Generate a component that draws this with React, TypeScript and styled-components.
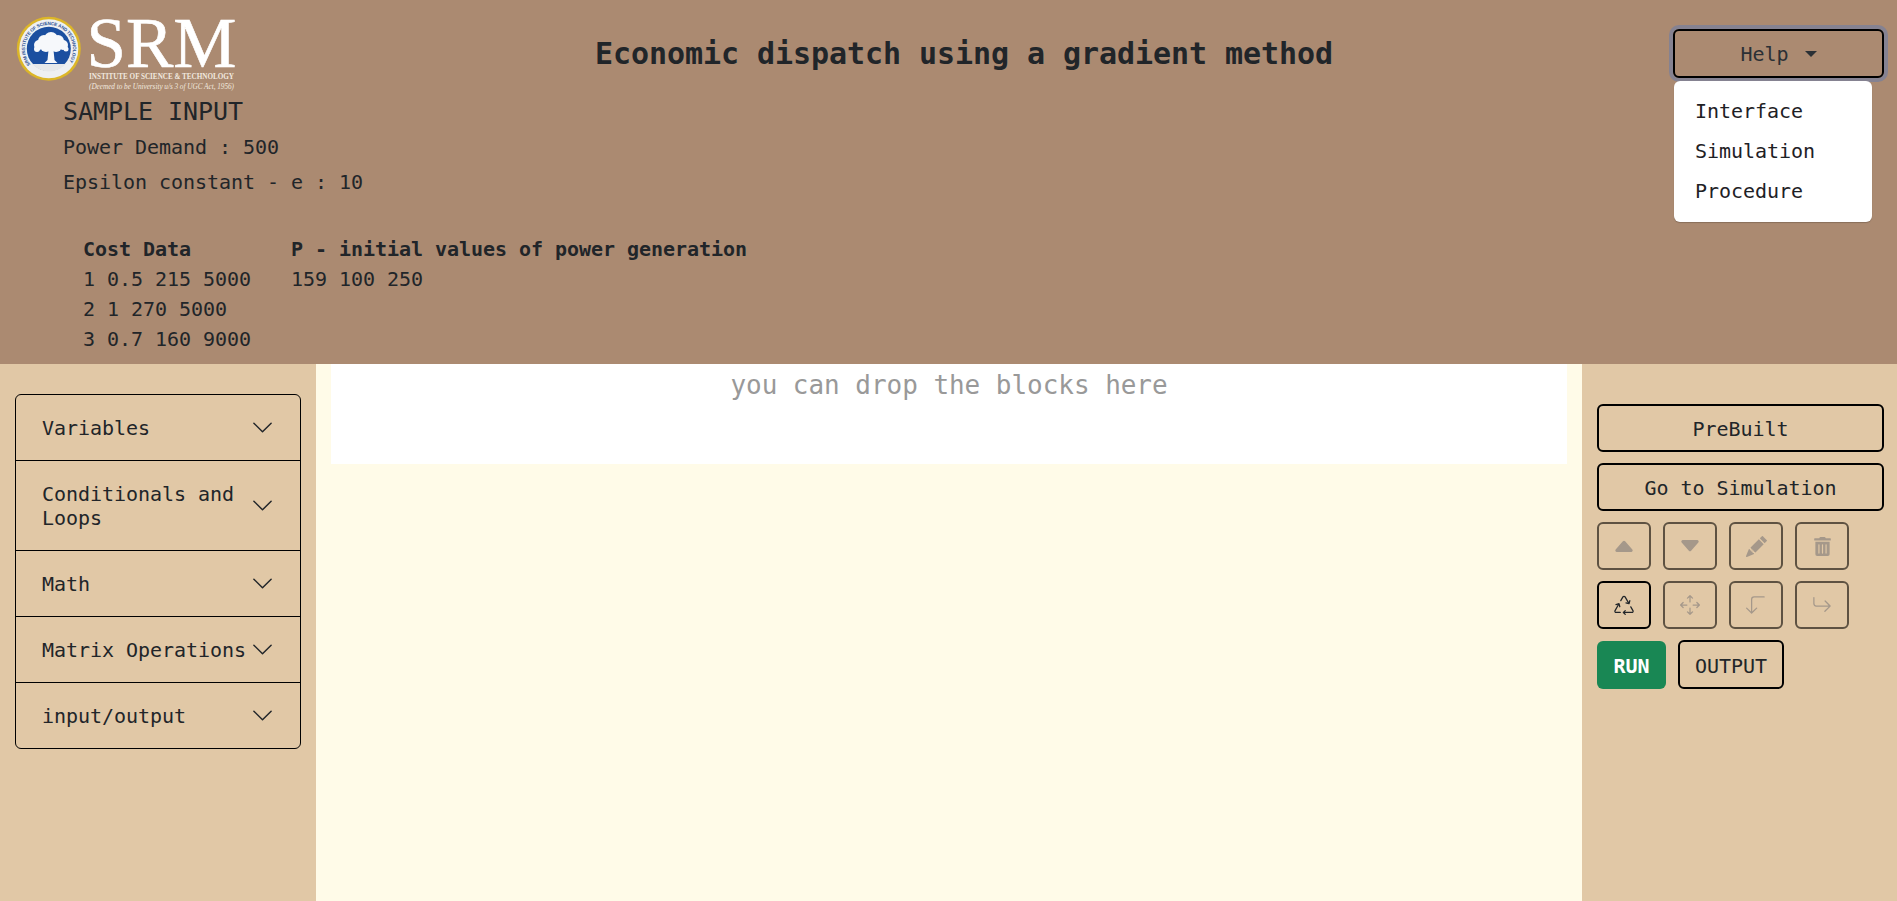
import React from "react";
import styled, { createGlobalStyle } from "styled-components";
import {
  BsCaretUpFill,
  BsCaretDownFill,
  BsFillPencilFill,
  BsRecycle,
  BsArrowsMove,
  BsArrow90DegDown,
  BsArrowReturnRight,
  BsChevronDown,
} from "react-icons/bs";
import { FaTrashAlt } from "react-icons/fa";

const Global = createGlobalStyle`
  html, body { margin: 0; padding: 0; background: #fffbe8; }
  body {
    font-family: "DejaVu Sans Mono", "Liberation Mono", monospace;
    font-size: 20px;
    color: #212529;
    letter-spacing: -0.04px;
    overflow: hidden;
  }
  * { box-sizing: border-box; }
`;

const Page = styled.div`
  width: 1897px;
  height: 901px;
  display: flex;
  flex-direction: column;
  overflow: hidden;
`;

const Header = styled.header`
  height: 364px;
  flex: none;
  background: #ab8a71;
`;

const TopRow = styled.div`
  display: flex;
  align-items: flex-start;
  height: 93px;
  padding: 14px 13px 0 15px;
`;

const Logo = styled.svg`
  display: block;
  flex: none;
  overflow: visible;
`;

const Title = styled.h1`
  flex: 1;
  margin: 0;
  font-size: 30px;
  line-height: 80px;
  font-weight: 700;
  text-align: center;
  letter-spacing: -0.06px;
`;

const HelpWrap = styled.div`
  position: relative;
  width: 211px;
  margin-top: 15px;
  flex: none;
`;

const HelpButton = styled.button`
  width: 100%;
  height: 49px;
  display: flex;
  align-items: center;
  justify-content: center;
  gap: 16px;
  background: transparent;
  border: 2px solid #000;
  border-radius: 6px;
  box-shadow: 0 0 0 4px #858291;
  color: #2b3035;
  font: inherit;
  letter-spacing: inherit;
  padding: 0;
`;

const Caret = styled.span`
  width: 0;
  height: 0;
  border-top: 6px solid #2b3035;
  border-left: 6px solid transparent;
  border-right: 6px solid transparent;
`;

const Menu = styled.ul`
  position: absolute;
  top: 52px;
  left: 1px;
  width: 198px;
  margin: 0;
  padding: 10px 0 11px;
  list-style: none;
  background: #fff;
  border-radius: 6px;
  box-shadow: 0 1px 1px rgba(0, 0, 0, 0.2);
  z-index: 2;
`;

const MenuItem = styled.li`
  height: 40px;
  line-height: 40px;
  padding-left: 21px;
  color: #1e2125;
`;

const SampleBlock = styled.div`
  padding-left: 63px;
`;

const SampleTitle = styled.h2`
  margin: 0;
  font-size: 25px;
  line-height: 37px;
  font-weight: 400;
`;

const SampleLine = styled.p`
  margin: 0;
  line-height: 35px;
`;

const CostTable = styled.div`
  display: grid;
  grid-template-columns: 208px auto;
  justify-content: start;
  grid-auto-rows: 30px;
  line-height: 30px;
  margin: 34px 0 0 20px;
`;

const Strong = styled.div`
  font-weight: 700;
`;

const Main = styled.main`
  flex: 1;
  display: flex;
  min-height: 0;
`;

const LeftPanel = styled.aside`
  width: 316px;
  flex: none;
  background: #e1c8a6;
  padding: 30px 15px 0;
`;

const Accordion = styled.div`
  width: 286px;
  border: 1px solid #000;
  border-radius: 6px;
`;

const AccordionRow = styled.div`
  display: flex;
  align-items: center;
  padding: 20.5px 26px 20.5px 26px;
  line-height: 24px;
  border-bottom: 1px solid #000;
  &:last-child {
    border-bottom: 0;
  }
`;

const RowLabel = styled.span`
  flex: 1;
  min-width: 0;
`;

const Canvas = styled.section`
  flex: 1;
  background: #fffbe8;
  padding: 0 15px;
`;

const DropZone = styled.div`
  height: 100px;
  background: #fff;
  color: #999;
  font-size: 26px;
  line-height: 42px;
  text-align: center;
`;

const RightPanel = styled.aside`
  width: 315px;
  flex: none;
  background: #e1c8a6;
  padding: 40px 13px 0 15px;
  display: flex;
  flex-direction: column;
  gap: 11px;
`;

const WideButton = styled.button`
  width: 100%;
  height: 48px;
  background: transparent;
  border: 2px solid #000;
  border-radius: 6px;
  color: #212529;
  font: inherit;
  letter-spacing: inherit;
  padding: 2px 0 0;
`;

const IconGrid = styled.div`
  display: grid;
  grid-template-columns: repeat(4, 54px);
  grid-auto-rows: 48px;
  gap: 11px 12px;
`;

const IconButton = styled.button<{ $active?: boolean }>`
  display: flex;
  align-items: center;
  justify-content: center;
  background: transparent;
  border: 2px solid ${(p) => (p.$active ? "#000" : "#5e5242")};
  border-radius: 6px;
  padding: 0;
  color: ${(p) => (p.$active ? "#212529" : "#a5988a")};
`;

const ActionRow = styled.div`
  display: flex;
  align-items: flex-start;
  gap: 12px;
`;

const RunButton = styled.button`
  width: 69px;
  height: 48px;
  margin-top: 1px;
  background: #198754;
  border: 0;
  border-radius: 6px;
  color: #fff;
  font: inherit;
  font-weight: 700;
  letter-spacing: inherit;
  padding: 2px 0 0;
`;

const OutputButton = styled.button`
  width: 106px;
  height: 49px;
  background: transparent;
  border: 2px solid #000;
  border-radius: 6px;
  color: #212529;
  font: inherit;
  letter-spacing: inherit;
  padding: 2px 0 0;
`;

const leaves = [
  [36, 25, 7], [29, 27, 6], [43, 27, 6], [24, 31, 5], [48, 31, 5], [31, 32, 6], [41, 32, 6], [36, 30, 7], [22, 35, 3], [51, 35, 2.5],
];

const SrmLogo = () => (
  <Logo width={240} height={78} viewBox="0 0 240 78">
    <defs>
      <path id="ring" d="M15.6 50.4 A24 24 0 1 1 52.4 50.4" />
    </defs>
    <circle cx="33.8" cy="34.8" r="32" fill="#dcb628" />
    <circle cx="33.8" cy="34.8" r="29.5" fill="#eef0f2" />
    <circle cx="33.8" cy="34.8" r="22" fill="#1b4fa0" />
    <path d="M17.2 50 A22.5 22.5 0 0 0 50.8 50 Z" fill="#e6e8ea" />
    <text fontFamily="Liberation Sans, sans-serif" fontSize="4.6" fill="#2a4f92" fontWeight="700">
      <textPath href="#ring" textLength="105">
        SRM INSTITUTE OF SCIENCE AND TECHNOLOGY
      </textPath>
    </text>
    <g fill="#f6f8fb">
      {leaves.map(([x, y, r]) => (
        <circle key={`${x}-${y}`} cx={x} cy={y} r={r} />
      ))}
      <path d="M33.5 36 h5 l1 10 l3 3 h-13 l3 -3 z" />
    </g>
    <text x="71.5" y="53" fontFamily="Liberation Serif, serif" fontSize="71" fill="#fff" stroke="#fff" strokeWidth="0.6">
      SRM
    </text>
    <text x="74" y="65.3" fontFamily="Liberation Serif, serif" fontSize="8.2" fontWeight="700" fill="#f1e8df" textLength="145" lengthAdjust="spacingAndGlyphs">
      INSTITUTE OF SCIENCE &amp; TECHNOLOGY
    </text>
    <text x="74" y="74.5" fontFamily="Liberation Serif, serif" fontSize="7.5" fontStyle="italic" fill="#f1e8df" textLength="145" lengthAdjust="spacingAndGlyphs">
      (Deemed to be University u/s 3 of UGC Act, 1956)
    </text>
  </Logo>
);

const sections = ["Variables", "Conditionals and Loops", "Math", "Matrix Operations", "input/output"];

export default function App() {
  return (
    <Page>
      <Global />
      <Header>
        <TopRow>
          <SrmLogo />
          <Title>Economic dispatch using a gradient method</Title>
          <HelpWrap>
            <HelpButton>
              Help
              <Caret />
            </HelpButton>
            <Menu>
              <MenuItem>Interface</MenuItem>
              <MenuItem>Simulation</MenuItem>
              <MenuItem>Procedure</MenuItem>
            </Menu>
          </HelpWrap>
        </TopRow>
        <SampleBlock>
          <SampleTitle>SAMPLE INPUT</SampleTitle>
          <SampleLine>Power Demand : 500</SampleLine>
          <SampleLine>Epsilon constant - e : 10</SampleLine>
          <CostTable>
            <Strong>Cost Data</Strong>
            <Strong>P - initial values of power generation</Strong>
            <div>1 0.5 215 5000</div>
            <div>159 100 250</div>
            <div>2 1 270 5000</div>
            <div />
            <div>3 0.7 160 9000</div>
            <div />
          </CostTable>
        </SampleBlock>
      </Header>
      <Main>
        <LeftPanel>
          <Accordion>
            {sections.map((s) => (
              <AccordionRow key={s}>
                <RowLabel>{s}</RowLabel>
                <BsChevronDown size={23} />
              </AccordionRow>
            ))}
          </Accordion>
        </LeftPanel>
        <Canvas>
          <DropZone>you can drop the blocks here</DropZone>
        </Canvas>
        <RightPanel>
          <WideButton>PreBuilt</WideButton>
          <WideButton>Go to Simulation</WideButton>
          <IconGrid>
            <IconButton><BsCaretUpFill size={24} /></IconButton>
            <IconButton><BsCaretDownFill size={24} /></IconButton>
            <IconButton><BsFillPencilFill size={21} /></IconButton>
            <IconButton><FaTrashAlt size={19} /></IconButton>
            <IconButton $active><BsRecycle size={20} /></IconButton>
            <IconButton><BsArrowsMove size={20} /></IconButton>
            <IconButton><BsArrow90DegDown size={20} /></IconButton>
            <IconButton><BsArrowReturnRight size={20} /></IconButton>
          </IconGrid>
          <ActionRow>
            <RunButton>RUN</RunButton>
            <OutputButton>OUTPUT</OutputButton>
          </ActionRow>
        </RightPanel>
      </Main>
    </Page>
  );
}
